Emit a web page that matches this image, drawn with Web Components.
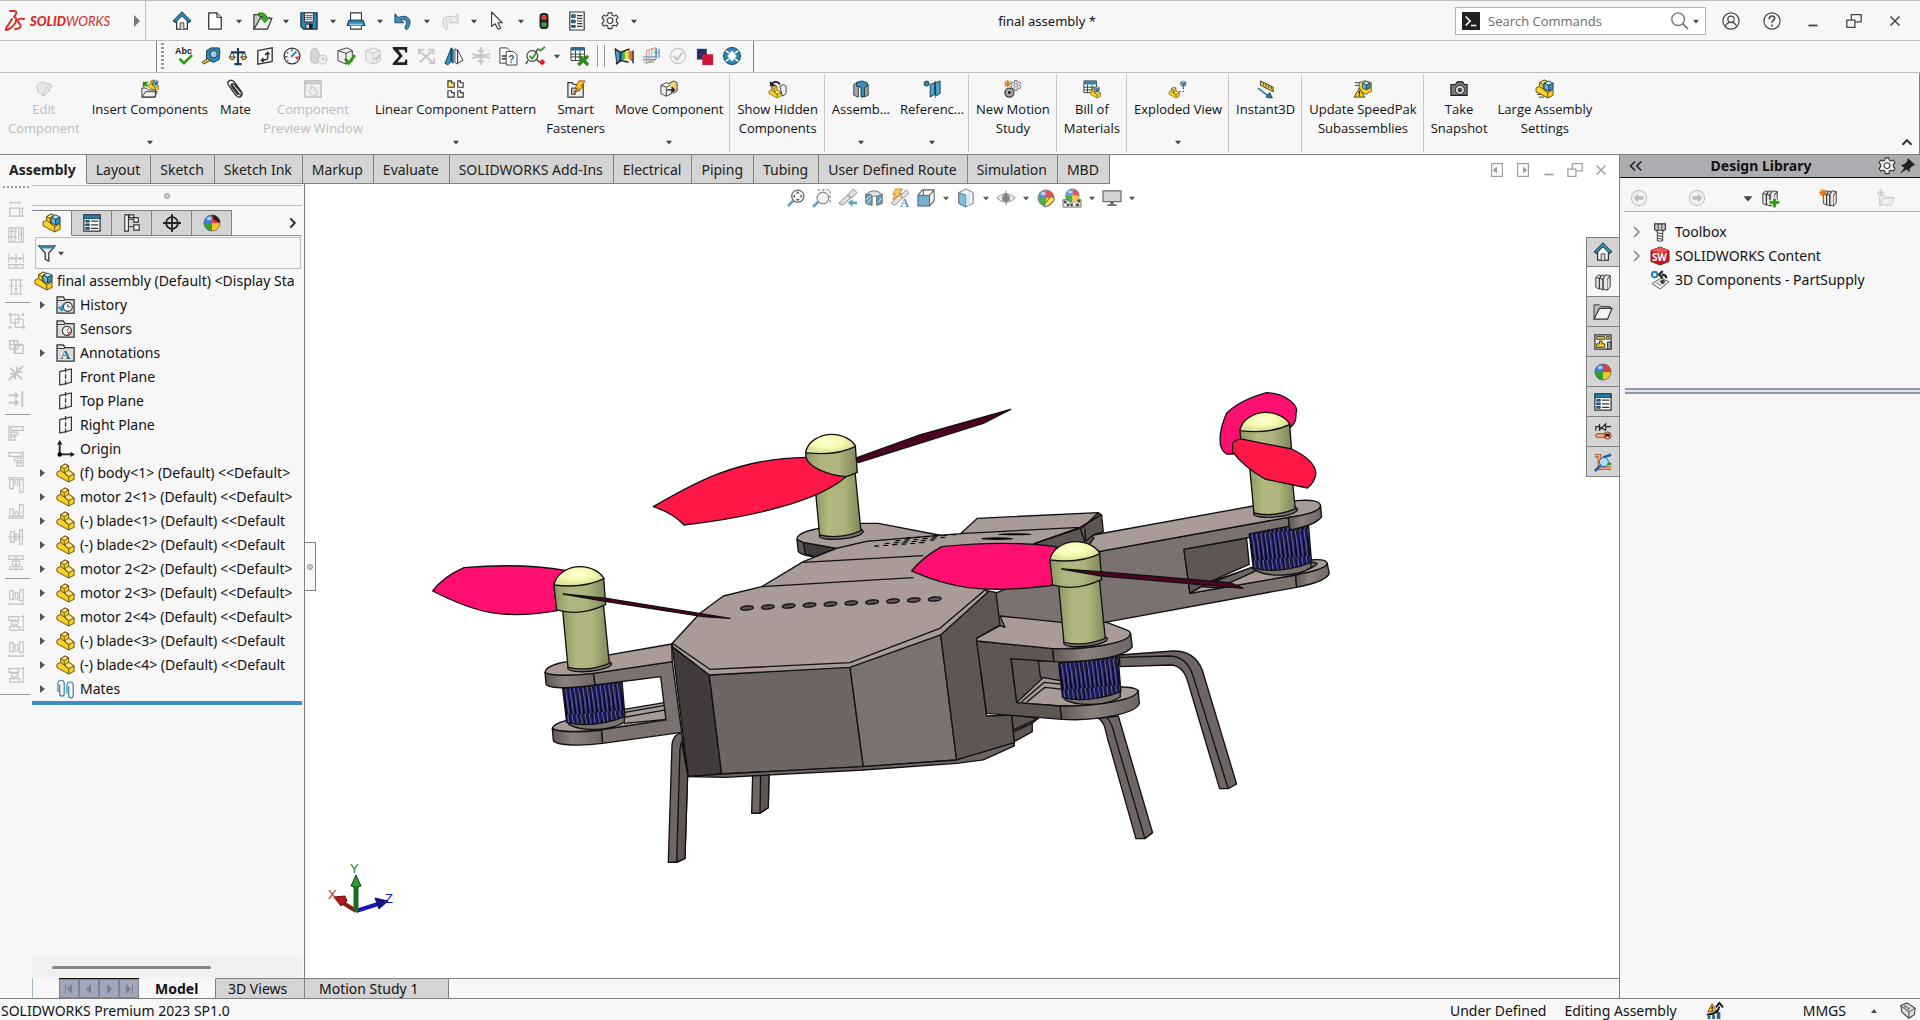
<!DOCTYPE html>
<html lang="en">
<head>
<meta charset="utf-8">
<title>final assembly</title>
<style>
:root {
  --bg: #f7f7f7;
  --line: #808080;
  --soft-line: #bdbdbd;
  --tab: #d4d4d4;
  --text: #111;
}
body {
  margin: 0;
  font: 14px/24px "Noto Sans", "Open Sans", sans-serif;
  color: var(--text);
  background: var(--bg);
}
</style>
</head>
<body>
<cad-app></cad-app>

<script>
// Icon bodies, all on a 20x20 grid
const cube = (x, y, s = 1) => `<g transform="translate(${x} ${y}) scale(${s})" stroke="#1c3f52" stroke-width=".8" stroke-linejoin="round"><path fill="#c2e6f4" d="M0 2 4 0l4 2-4 2z"/><path fill="#6dbad9" d="M0 2l4 2v5L0 7z"/><path fill="#3a8fb8" d="M8 2 4 4v5l4-2z"/></g>`;
const block = `<g stroke="#5c4700" stroke-width="1" stroke-linejoin="round"><path fill="#f9d12c" d="M0 9l4-2V3l5-3 4 2v5l6 4v6l-6 3L0 13z"/><path fill="#fde77a" d="M4 3l5-3 4 2-5 3zM8 10l5-3 6 4-6 3z"/><path fill="none" d="M8 5v5l5 4v6M4 7l4 3"/></g>`;
const ball = `<path fill="#e03a3a" d="M10 10V1a9 9 0 0 1 9 9z"/><path fill="#3d7fdd" d="M10 10H1a9 9 0 0 1 9-9z"/><path fill="#2ea12e" d="M10 10v9a9 9 0 0 1-9-9z"/><path fill="#f3c32b" d="M10 10h9a9 9 0 0 1-9 9z"/><circle cx="10" cy="10" r="9" fill="none" stroke="#555" stroke-width=".7"/><ellipse cx="7" cy="5" rx="3" ry="2" fill="#fff" opacity=".6"/>`;
const folder = `<path fill="#ddd" stroke="#333" stroke-width="1.400" d="M0 19V1h7l2 3h10v15z"/><path stroke="#333" d="M0 5h9"/>`;
const books = `<g fill="#e4e4e4" stroke="#333" stroke-linejoin="round"><path d="M2 5l3-3 3 1-2 3v12l-4-2zM6 6l3-4 3 1-2 3v13l-4-2zM10 6l3-4 5 1-3 4v12l-5-1z"/><path d="M15 7l3-4v12l-3 4M2 5l4 1M6 6l4 1"/></g>`;
const house = `<path fill="#fff" stroke="#333" stroke-width="1.400" d="M4 9v10h12V9l-6-6z"/><path fill="#ddd" stroke="#333" d="M8 19v-7h4v7"/><path fill="none" stroke="#17415a" stroke-width="4" d="M1 11l9-9 9 9"/><path fill="none" stroke="#3a8db5" stroke-width="2" d="M2 10l8-8 8 8"/>`;
const proplist = `<path fill="#fff" stroke="#333" stroke-width="1.400" d="M1 1h18v18H1z"/><path fill="#2a7fa8" stroke="#17415a" d="M1 1h18v4H1z"/><path fill="#1f7fb0" stroke="#17415a" d="M3 7h4v2H3zM3 11h4v2H3zM3 15h4v2H3z"/><path stroke="#333" stroke-width="1.400" d="M9 8h8M9 12h8M9 16h8"/>`;
const gearShape = `<path fill="#eee" stroke="#333" stroke-width="1.200" stroke-linejoin="round" d="M8 1h4l.6 2.6 2 1 2.300-1.200 2 3-1.800 1.800v2.600l1.800 1.900-2 3-2.400-1.100-1.900 1-.6 2.900H8l-.6-2.900-1.900-1-2.400 1.100-2-3L3 10.800V8.200L1.100 6.400l2-3 2.300 1.200 2-1z"/><circle cx="10" cy="9.500" r="3.200" fill="#fff" stroke="#333" stroke-width="1.200"/>`;
const burst = `<path stroke="#e07b1a" stroke-width="1.300" d="M4 0v8M0 4h8M1 1l6 6M7 1 1 7"/>`;
const plane = `<path fill="none" stroke="#333" stroke-width="1.300" d="M3 4l13-3v15L3 19z"/><path stroke="#333" stroke-width="1.300" stroke-dasharray="5 2" d="M9.500 0v20"/>`;

const icons = {
  caret: `<path fill="#444" d="M5 8h10l-5 6z"/>`,
  home: house,
  doc: `<path fill="#fff" stroke="#333" stroke-width="1.400" stroke-linejoin="round" d="M3 1h9l5 5v13H3z"/><path fill="#ccc" stroke="#333" d="M12 1v5h5"/>`,
  open: `<path fill="#ccc" stroke="#333" stroke-width="1.300" d="M1 19V3h5l2 2h7v4"/><path fill="#eee" stroke="#333" stroke-width="1.300" d="M1 19 8 7h13l-5 12z"/><path fill="#39a81c" stroke="#1c6b0a" stroke-width=".6" d="M6 1c6-1 9 1 9 5h4l-6 6-5-6h3c0-2-2-3-5-3z"/>`,
  save: `<path fill="#2f86b0" stroke="#12384d" stroke-width="1.400" d="M1 1h18v18H4l-3-3z"/><path fill="#eee" stroke="#333" d="M5 1h10v10H5z"/><path stroke="#555" d="M6 4h8M6 6h8M6 8h8"/><path fill="#222" d="M6 13h8v6H6z"/><path fill="#ddd" d="M7 14h3v4H7z"/>`,
  print: `<path fill="#fff" stroke="#333" stroke-width="1.200" d="M4 10V1h12v9zM4 14h12v5H4z"/><path fill="#2f86b0" stroke="#12384d" d="M2 9h16l2 6H0z"/><path fill="#9cd0e6" d="M3 13h14v2H3z"/>`,
  undo: `<path fill="#3a8fb8" stroke="#12384d" stroke-width=".9" stroke-linejoin="round" d="M1 2v10h10L8 9c5-2 8 2 4 8l2 3C22 12 17 1 5 6z"/>`,
  redo: `<path fill="#ececec" stroke="#bdbdbd" stroke-linejoin="round" d="M19 2v10H9l3-3C7 7 4 11 8 17l-2 3C-2 12 3 1 15 6z"/>`,
  cursor: `<path fill="#fff" stroke="#333" stroke-width="1.200" stroke-linejoin="round" d="M4 0v16l4-3 3 6 3-1-3-6h5z"/>`,
  traffic: `<rect x="5" y="1" width="10" height="18" rx="4" fill="#222"/><circle cx="10" cy="6" r="3" fill="#e23b2a"/><circle cx="10" cy="14" r="3" fill="#3c9a2f"/>`,
  list: `<path fill="#fff" stroke="#333" stroke-width="1.300" d="M2 0h16v20H2z"/><path fill="#2f86b0" stroke="#12384d" d="M4 3h4v3H4zM4 9h4v3H4zM4 15h4v2H4z"/><path stroke="#333" stroke-width="1.300" d="M10 4h6M10 7h6M10 10h6M10 13h6M10 16h6"/>`,
  gear: gearShape,
  spell: `<text x="0" y="8" font-size="10" font-weight="600" fill="#222">Abc</text><path fill="none" stroke="#2c9a12" stroke-width="3" d="M5 13l5 5 9-9"/>`,
  tape: `<path fill="#2f86b0" stroke="#12384d" d="M5 4l5-3h9l1 4-1 9-6 3-8-3z"/><circle cx="13" cy="8" r="4" fill="#9cd0e6" stroke="#12384d"/><path fill="#f5c518" stroke="#333" d="M0 17l6-4 3 2-7 4z"/>`,
  scales: `<path fill="none" stroke="#17415a" stroke-width="2.400" d="M10 1v17M6 19h8M2 6h16"/><path fill="#f5c518" stroke="#333" d="M0 11h7l-2 3H2zM13 11h7l-2 3h-3z"/><path fill="none" stroke="#333" d="M3 6l-2 5M4 6l2 5M16 6l-2 5M17 6l2 5"/>`,
  section: `<path fill="#fff" stroke="#333" stroke-width="1.500" d="M2 4l16-3v15L2 19z"/><path fill="none" stroke="#333" stroke-width="1.700" d="M6 15l5-1c2 0 2-1 2-3V6M10 9l3-3 2 2M8 12l-2 3 3 1"/>`,
  gauge: `<circle cx="10" cy="10" r="8.800" fill="#fff" stroke="#333" stroke-width="1.400"/><path stroke="#3a8fb8" stroke-width="2.500" d="M9 11l6-6"/><path fill="#e23b2a" d="M13 11l5-1-2 5z"/><path stroke="#333" stroke-width="1.200" d="M4 6l2 1M10 2v3M2 11h3M5 15l1-1"/>`,
  grayball: `<g fill="#d5d5d5" stroke="#b9b9b9"><path d="M1 9c-1-10 9-10 9-1l2 6-5 5-6-3z"/><circle cx="14" cy="14" r="5" fill="#eee"/><path d="M14 11v3h3"/></g>`,
  boxcheck: `<path fill="#eee" stroke="#333" stroke-linejoin="round" d="M1 4l10-3 6 3v12l-7 3-9-4z"/><path fill="none" stroke="#333" d="M1 4l9 3 7-3M10 7v12"/><path fill="none" stroke="#2c9a12" stroke-width="3" d="M9 13l4 5 7-9"/>`,
  boxgray: `<g fill="#eee" stroke="#c0c0c0" stroke-linejoin="round"><path d="M2 4l9-3 7 3v12l-8 3-8-4z"/><path fill="none" d="M2 4l8 3 8-3M10 7v12"/><path fill="none" stroke-width="2" d="M12 12l2 2 3-5"/></g>`,
  sigma: `<path fill="#222" d="M2 0h16v6h-2l-1-3H8l5 7-6 7h8l1-3h2v6H2v-2l7-8-7-8z"/>`,
  pathgray: `<path fill="none" stroke="#c6c6c6" stroke-width="2" d="M2 5l14 12M15 5 2 17M1 8V3h6M11 3h6v5M18 12v6h-6"/>`,
  mirror: `<path fill="#3a8fb8" stroke="#12384d" d="M0 18l7-17v15l-4 4zM7 1l2 2v15l-2-2z"/><path fill="#fff" stroke="#333" d="M11 2v15l3 2V4zM14 3l6 12-6 3z"/>`,
  compress: `<path fill="none" stroke="#c8c8c8" stroke-width="2" d="M0 8q10 2 20 0M0 12q10-2 20 0M10 0v6M7 3l3 4 3-4M10 20v-6M7 17l3-4 3 4"/>`,
  docq: `<path fill="#fff" stroke="#333" d="M1 1h8l3 3v14H1z"/><path stroke="#333" stroke-width="1.500" d="M3 10h5M3 13h5"/><path fill="#fff" stroke="#333" d="M8 5h8l4 4v11H8z"/><text x="10" y="18" font-size="12" font-weight="700" fill="#1f6f96">?</text>`,
  checks: `<circle cx="7" cy="10" r="6" fill="none" stroke="#444" stroke-width="1.300"/><path fill="none" stroke="#2c9a12" stroke-width="2" d="M4 10l3 3 4-6M14 2l2 2 5-4"/><path fill="none" stroke="#444" stroke-width="1.600" d="M10 6l4-4M2 15l-2 4M11 13l4 4"/><path stroke="#d22" stroke-width="1.600" d="M18 14v6M15 17h6M16 15l4 4M20 15l-4 4"/>`,
  excel: `<path fill="#fff" stroke="#333" d="M0 1h15v14H0z"/><path fill="#2a6f92" d="M0 0h15v4H0z"/><path stroke="#333" d="M0 8h15M0 11h15M5 4v11M10 4v11"/><path stroke="#2c8a12" stroke-width="3.600" d="M9 10l10 10M19 10 8 20"/>`,
  rainbow: `<path fill="#5a9cc0" stroke="#222" d="M0 2l6 4v8l-4 5z"/><path fill="#2040c0" d="M5 6l3-1v9l-4 2z"/><path fill="#2fb52f" d="M8 5l3-2v10l-3 2z"/><path fill="#f4e02a" d="M11 3l4-1v10l-4 2z"/><path fill="#e2762a" d="M15 3l4 2v11l-4-3z"/><path fill="none" stroke="#222" stroke-width="1.600" d="M0 2l6 4 10-4M20 4v14M1 19l6-4 8 2"/>`,
  zebra: `<path fill="none" stroke="#e8958a" stroke-width="1.400" d="M5 4l10-3v13L5 18z"/><path stroke="#6a9ccc" stroke-width="1.500" d="M1 11h15M1 14h14M16 1v12M19 2v10M13 6h6"/><path stroke="#8fb58f" d="M8 4v13M11 3v13M2 17h12"/>`,
  checkgray: `<circle cx="10" cy="10" r="8.500" fill="#f4f4f4" stroke="#c5c5c5" stroke-width="1.300"/><path fill="none" stroke="#c5c5c5" stroke-width="2.500" d="M5 10l4 4 6-8"/>`,
  squares: `<path fill="#25336e" d="M1 2h11v12H1z"/><path fill="#cf1634" d="M7 8h12v12H7z"/>`,
  globe: `<circle cx="10" cy="10" r="9.500" fill="#2f86b0" stroke="#12384d"/><path fill="#fff" d="M10 4l5 6-5 6-5-6z"/><path stroke="#fff" stroke-width="1.500" d="M3 4l4 3M17 4l-4 3M3 16l4-3M17 16l-4-3"/>`,
  edit: `<g fill="#e8e8e8" stroke="#c0c0c0" stroke-linejoin="round"><path d="M2 6l6-4 8 3v7l-7 6-6-5z"/><path d="M9 18l1-5 6-9 3 2-6 9z"/></g>`,
  insert: `<g transform="translate(8 0) scale(.6)">${block}${cube(9, 0, 1.1)}</g><path fill="#eee" stroke="#333" d="M1 19V9h5l2 2h8v8zM1 19l4-6h13l-3 6z"/><path fill="none" stroke="#2c8a12" stroke-width="2" d="M3 8V3h5M3 3l4 4"/>`,
  clip: `<path fill="none" stroke="#333" stroke-width="1.500" stroke-linecap="round" d="M6 5l8 10c2 3 5 1 3-2L9 2C5-2 0 2 3 6l8 11c4 4 8 1 6-3L9 5C7 3 5 5 6 7l7 9"/>`,
  preview: `<g fill="#efefef" stroke="#bdbdbd"><path stroke-width="1.500" d="M1 1h18v18H1z"/><path fill="#d5d5d5" d="M1 1h18v3H1z"/><path d="M5 12l3-2V7l4 2v3l3 1v3l-5 2z"/></g>`,
  pattern: `<g fill="#fff" stroke="#333" stroke-width="1.200"><path fill="#f9df6a" d="M1 1h4v2h3v5H1z"/><path d="M12 1h3v2h3v5h-6zM1 12h4v2h3v5H1zM12 12h3v2h3v5h-6z"/></g>`,
  fastener: `<path fill="#eee" stroke="#333" stroke-width="1.300" d="M1 3h5l1 2h11v14H1z"/><path fill="#bbb" stroke="#333" d="M5 9h9v3H9v4H5z"/><path fill="#f8c32b" stroke="#a04a00" d="M13 1h7l-4 6h3L8 15l4-6H9z"/>`,
  move: `<path fill="#eee" stroke="#333" d="M1 6l6-3 6 2v10l-6 3-6-3zM1 6l6 2 6-3M7 8v10"/><path fill="#f3d27a" stroke="#333" d="M10 4l5-3 4 2v9l-4 3"/><path fill="none" stroke="#111" stroke-width="1.600" d="M8 11h7M13 8l3 3-3 3"/>`,
  show: `<g transform="translate(0 6) scale(.7)">${block}</g><path fill="#eee" stroke="#333" d="M12 7l4-2 3 2v8l-4 3z"/><path fill="none" stroke="#222" stroke-width="2" d="M3 6c1-5 7-5 9-1M2 2v4h5"/>`,
  feature: `<path fill="#aaa" stroke="#333" d="M2 5l5-3v17l-5-2zM13 3l5 2v12l-5 2z"/><path fill="#3a8db5" stroke="#12384d" d="M5 3l6-2 6 2v4l-3 1v10l-4 1V8L5 7z"/>`,
  reference: `<circle cx="4" cy="4" r="2.800" fill="#2f86b0" stroke="#12384d"/><path fill="#4aa6cf" stroke="#12384d" d="M8 5l5-2v13l-5 3zM14 3l5-2v14l-5 3z"/><path stroke="#222" stroke-dasharray="4 2" d="M13.500 1v19"/>`,
  motion: `${burst}<g transform="translate(7 0) scale(.62)">${gearShape}</g><circle cx="6" cy="14" r="5" fill="#aaa" stroke="#444" stroke-width="1.500"/><circle cx="6" cy="14" r="1.500"/>`,
  bom: `<path fill="#fff" stroke="#333" d="M1 1h14v13H1z"/><path fill="#2f86b0" d="M1 1h14v4H1z"/><path stroke="#333" d="M1 8h14M1 11h14M5 5v9M10 5v9"/><g transform="translate(8 8) scale(.6)">${block}${cube(8, -1, 1.1)}</g>`,
  exploded: `<g transform="translate(0 8) scale(.6)">${block}</g>${cube(13, 1, .7)}<path fill="none" stroke="#222" stroke-dasharray="2 2" d="M11 13h5V8"/>`,
  instant: `<path fill="#f5d02a" stroke="#333" d="M4 1l14 7v5L4 6z"/><path stroke="#333" d="M7 3v3M10 4v4M13 6v3M16 7v3"/><path stroke="#2f86b0" stroke-width="2" d="M1 9l12 9"/><path fill="#2f86b0" stroke="#12384d" d="M17 20l-7-1 4-5z"/>`,
  speedpak: `<path stroke="#333" d="M1 3h6M1 6h5"/><g transform="translate(5 0) scale(.75)"><path fill="#f7cf2a" stroke="#333" d="M1 4l8-3 10 3v13l-8 4-10-4z"/>${cube(6, 2, 1.4)}</g><path fill="#ffd500" stroke="#333" d="M6 9l6 10H0z"/><path stroke="#111" stroke-width="1.500" d="M6 12v4M6 17v1"/>`,
  camera: `<path fill="#777" stroke="#222" stroke-width="1.300" d="M1 5h5l2-3h6l2 3h3v12H1z"/><circle cx="11" cy="11" r="5" fill="#ddd" stroke="#222"/><circle cx="11" cy="11" r="2.500" fill="#444"/>`,
  asm: `${block}${cube(9, 1, 1.25)}`,
  large: `<path stroke="#333" d="M1 13h7M1 16h7M3 19h6"/>${block}${cube(9, 1, 1.25)}`,
  props: proplist,
  config: `<path fill="none" stroke="#333" d="M4 3v14M4 6h8M4 14h8"/><path fill="#fff" stroke="#333" stroke-width="1.300" d="M2 1h4v18H2zM7 1h5v3H7zM12 4h5v5h-5zM12 12h6v6h-6z"/>`,
  target: `<circle cx="10" cy="10" r="6.500" fill="none" stroke="#222" stroke-width="2"/><path stroke="#222" stroke-width="2" d="M10 0v20M0 10h20"/>`,
  ball,
  appear: `${ball}<path fill="#222" d="M10 1a9 9 0 0 1 9 9l-7-4z"/>`,
  filter: `<path fill="#eee" stroke="#333" stroke-width="1.400" d="M1 2h18l-7 8v9l-4-2v-7z"/><path fill="#2f86b0" d="M1 1h18l-2 4H3z"/>`,
  history: `${folder}<circle cx="12" cy="12" r="5" fill="#fff" stroke="#333" stroke-width="1.300"/><path fill="none" stroke="#333" d="M12 9v3h3"/><path fill="none" stroke="#2f86b0" stroke-width="2" d="M5 15c0-4 2-6 5-7M2 12l3 4 3-2"/>`,
  sensors: `${folder}<circle cx="11" cy="12" r="5" fill="#fff" stroke="#333" stroke-width="1.400"/><path stroke="#333" d="M11 12l2-3"/><path fill="#e23b2a" d="M11 13h4l-2 3z"/>`,
  notes: `${folder}<text x="4" y="17" font-size="15" font-weight="700" font-family="Liberation Serif, serif" fill="#1f6f96">A</text>`,
  plane,
  origin: `<path fill="none" stroke="#222" stroke-width="2" d="M3 3v13h13"/><path fill="#222" d="M0 5l3-5 3 5zM15 13l5 3-5 3z"/><circle cx="3" cy="16" r="2.500"/>`,
  part: block,
  mates: `<path fill="none" stroke="#2f7fa6" stroke-width="1.300" d="M1 13V4c0-5 7-5 7 0v11c0 4-5 4-5 0V5M11 15V6c0-5 7-5 7 0v11c0 4-5 4-5 0V7"/>`,
  zoomfit: `<path stroke="#4b90b5" stroke-width="3" d="M1 19l6-6"/><circle cx="12" cy="8" r="6.800" fill="#f8f8f8" stroke="#555" stroke-width="1.400"/><path fill="#333" d="M12 2.500l2 2.500h-4zM12 13.500l2-2.500h-4zM6.500 8L9 6v4zM17.500 8L15 6v4z"/>`,
  zoomarea: `<path stroke="#4b90b5" stroke-width="3" d="M0 20l6-6"/><circle cx="11" cy="10" r="6.500" fill="#eee" stroke="#777" stroke-width="1.300"/><path fill="none" stroke="#444" stroke-dasharray="3 2" d="M5 1h14v14"/>`,
  prevview: `<path fill="#ddd" stroke="#666" d="M0 16l9-9 4 3-9 8zM10 6l6-6 4 4-6 6z"/><path fill="#4b90b5" d="M10 15l5-4v3h5v3h-5v3z"/>`,
  sectview: `<path fill="#ddd" stroke="#555" d="M1 6q9-8 18 0v10l-6 2V8H8v10l-7-2z"/><path fill="#4b90b5" stroke="#555" d="M1 6h6v12l-6-2zM13 8l6-2v10l-6 2z"/><path stroke="#def" d="M1 12l6-5M2 16l5-5M14 15l5-5"/>`,
  dynview: `<path fill="#ddd" stroke="#777" d="M0 16l9-9 4 3-9 8zM11 7l6-6 3 4-6 5z"/><path fill="#f8c32b" stroke="#c06a1a" d="M5 0h8L9 5h3L2 12l3-6H2z"/><text x="10" y="20" font-size="14" font-weight="700" font-family="Liberation Serif, serif" fill="#3a85ad">A</text>`,
  orient: `<path fill="none" stroke="#444" stroke-width="1.200" d="M1 7l5-6h13v12l-5 6M14 7l5-6M7 1v6"/><path fill="#5aa5c8" stroke="#335" d="M1 7h13v12H1z"/>`,
  display: `<path fill="#eee" stroke="#555" d="M2 4l8-4 8 4v12l-8 4-8-4z"/><path fill="#6db3d3" stroke="#357" d="M2 4l8 3v13l-8-4z"/><path fill="#c5e2ee" d="M10 7l4-2v13l-4 1z"/>`,
  eye: `<path fill="#eee" stroke="#999" stroke-width="1.300" d="M0 10q10-10 20 0-10 9-20 0z"/><circle cx="10" cy="10" r="4.500" fill="#777"/><path stroke="#555" d="M10 2v16"/>`,
  ballpen: `${ball}<path fill="#f7dc3c" stroke="#444" d="M9 16l7-8 4 4-8 7-4 1z"/>`,
  scene: `<path fill="#fff" stroke="#333" d="M0 12h20v8H0z"/><path fill="#333" d="M1 13h3v3H1zM8 16h3v3H8zM4 16h3v3H4zM14 16h4v3h-4zM16 12h3v3h-3z"/><g transform="translate(2 -1) scale(.85)">${ball}</g>`,
  monitor: `<path fill="#ccc" stroke="#555" stroke-width="1.400" d="M0 2h20v12H0z"/><path fill="#555" d="M8 14h4v3h3v2H5v-2h3z"/>`,
  books,
  explorer: `<path fill="#bbb" stroke="#333" d="M0 18V2h6l2 2h10v4"/><path fill="#f4f4f4" stroke="#333" stroke-width="1.300" d="M0 18 6 6h14l-5 12z"/>`,
  palette: `<path fill="#eee" stroke="#333" stroke-width="1.400" d="M1 2h18v16H1z"/><path fill="#f5c518" stroke="#333" d="M3 4h9v3H3zM14 4h3v3h-3zM6 9h3v3h3v4H3v-4h3z"/><path fill="#999" stroke="#333" d="M15 10h4v8h-4z"/>`,
  valve: `<path fill="none" stroke="#222" stroke-width="1.200" d="M2 9V4h4l7 4V1L6 8V1M13 4h6"/><path fill="none" stroke="#8a3a1a" stroke-width="5" stroke-linecap="round" d="M4 14l12 0"/><path fill="none" stroke="#f4b08a" stroke-width="3" stroke-linecap="round" d="M4 14h10"/><circle cx="15" cy="14" r="4" fill="#f4b08a" stroke="#8a3a1a"/><path stroke="#8a3a1a" d="M13 12v4l2-2 2 2v-4"/>`,
  route: `<path fill="none" stroke="#a04a1a" stroke-width="4" d="M1 3h5v14h13"/><path fill="none" stroke="#f5b07a" stroke-width="2" d="M1 3h5v14h13"/><path stroke="#2060b0" stroke-width="3" d="M10 5l9-3M1 20l6-6"/><path stroke="#2c9a12" stroke-width="3" d="M14 12h5"/><circle cx="11" cy="10" r="5" fill="#b5daf0" stroke="#2060b0"/>`,
  back: `<circle cx="10" cy="10" r="8.500" fill="#f2f2f2" stroke="#c8c8c8" stroke-width="1.300"/><path fill="#bdbdbd" d="M4 10l5-5v3h6v4H9v3z"/>`,
  forward: `<circle cx="10" cy="10" r="8.500" fill="#f2f2f2" stroke="#c8c8c8" stroke-width="1.300"/><path fill="#bdbdbd" d="M16 10l-5-5v3H5v4h6v3z"/>`,
  bookadd: `${books}<path fill="#2c9a12" stroke="#fff" d="M13 10h4v3h4v4h-4v4h-4v-4H9v-4h4z"/>`,
  booknew: `<g transform="translate(3 0) scale(.9 1)">${books}</g>${burst}`,
  foldernew: `<g stroke="#c5c5c5" fill="#eee"><path d="M3 18V7h5l2 2h7v2M3 18l4-8h12l-3 8z"/><path d="M4 0v8M0 4h8M1 1l6 6M7 1 1 7"/></g>`,
  bolt: `<path fill="#ccc" stroke="#333" stroke-width="1.300" d="M4 1h12v6l-3 2H7L4 7z"/><path fill="#eee" stroke="#333" d="M7 8h6v12H7z"/><path stroke="#333" d="M8 1v7M12 1v7M7 11l6 1M7 14l6 1M7 17l6 1"/>`,
  sw: `<path fill="#c71c22" stroke="#7a0c10" d="M0 4l10-4 10 4v12l-10 4-10-4z"/><path fill="#e85a5a" d="M0 4l10-4 10 4-10 3z"/><text x="1" y="16" font-size="11" font-weight="700" fill="#fff">SW</text>`,
  supply: `<path fill="#eee" stroke="#555" d="M1 14l10-6 9 4-10 8zM6 13l5 3M9 11l5 3"/><circle cx="13" cy="12" r="2.500" fill="#444"/><circle cx="4" cy="4" r="3" fill="#fff" stroke="#2f86b0" stroke-width="2.500"/><path fill="none" stroke="#222" stroke-width="2.400" d="M17 8c0-3-2-4-5-4M13 0L9 4l4 4"/>`,
  collapse: `<path fill="none" stroke="#222" stroke-width="1.800" d="M10 5l-5 5 5 5M17 5l-5 5 5 5"/>`,
  pin: `<path fill="#222" d="M11 1l8 8-3 1-3 3v4L3 9l4-1 3-3zM7 12l2 2-7 5z"/>`,
  right: `<path fill="none" stroke="#333" stroke-width="2.200" d="M7 5l5 5-5 5"/>`,
  up: `<path fill="none" stroke="#333" stroke-width="2.200" d="M5 13l5-5 5 5"/>`,
  user: `<circle cx="10" cy="10" r="9" fill="none" stroke="#444" stroke-width="1.300"/><circle cx="10" cy="8" r="3.500" fill="none" stroke="#444" stroke-width="1.300"/><path fill="none" stroke="#444" stroke-width="1.300" d="M4 16c1-6 11-6 12 0"/>`,
  help: `<circle cx="10" cy="10" r="9" fill="none" stroke="#444" stroke-width="1.300"/><path fill="none" stroke="#444" stroke-width="1.800" d="M7 8c0-5 6-4 6-1 0 2-3 2-3 5M10 14v2"/>`,
  min: `<path stroke="#444" stroke-width="2" d="M5 15h10"/>`,
  restore: `<path fill="none" stroke="#444" stroke-width="1.400" d="M2 9h9v8H2zM7 9V3h11v8h-7"/>`,
  close: `<path stroke="#444" stroke-width="1.600" d="M5 5l10 10M15 5 5 15"/>`,
  dockleft: `<path fill="none" stroke="#444" stroke-width="1.300" d="M4 3h12v14H4z"/><path fill="#444" d="M5 10l5-4v8z"/>`,
  dockright: `<path fill="none" stroke="#444" stroke-width="1.300" d="M4 3h12v14H4z"/><path fill="#444" d="M15 10l-5-4v8z"/>`,
  prompt: `<path fill="#222" d="M0 0h20v20H0z"/><path fill="none" stroke="#fff" stroke-width="1.800" d="M4 5l5 5-5 5M10 15h6"/>`,
  search: `<circle cx="9" cy="8" r="7" fill="none" stroke="#777" stroke-width="1.500"/><path stroke="#777" stroke-width="2" d="M14 13l6 6"/>`,
  rebuild: `<path fill="#2d6285" d="M3 15h3v4H3zM8 14h3v5H8zM13 11h4v8h-4z"/><path fill="#f8c32b" stroke="#8a3a00" d="M8 2l5 9H3z"/><path stroke="#111" stroke-width="1.500" d="M8 5v3M8 9v1"/><path fill="none" stroke="#111" stroke-width="2" d="M2 14c8 0 13-2 14-9M12 6l4-5 4 5"/>`,
  tag: `<path fill="#ddd" stroke="#444" stroke-width="1.200" d="M2 4l7-3 9 6-1 7-6 4L3 11z"/><path fill="none" stroke="#444" d="M2 4l9 7 7-4M11 11v7M6 4l6 4M5 7l3-3M9 9l3-3"/>`,
  d1: `<path d="M3 9h11v9H3zM4 3h10M4 1v4M14 1v4M17 9v9M15 9h4M15 18h4"/>`,
  d2: `<path d="M2 2v16h16V2H2M5 2v16M9 2v16M13 4v12M16 2v16M3 6h8M3 12h8M14 9h4"/>`,
  d3: `<path d="M2 2v10M10 2v10M18 2v10M2 7h16M2 14h16v4H2zM10 14v4M5 5l2 4M13 5l2 4"/>`,
  d4: `<path d="M3 2h14M3 18h14M5 2v16M10 2v16M15 2v16M3 9h4M8 12h4M13 9h4"/>`,
  d5: `<path d="M4 3h9v9H4zM9 8h9v9H9z"/><path stroke-width="3" d="M2 3h3M16 3h3M2 17h3M17 17h3"/>`,
  d6: `<path stroke-width="1.500" d="M3 3h9v9H3zM9 8h9v9H9zM3 7h14M8 3v14"/>`,
  d7: `<path stroke-width="2" d="M2 18l6-6M18 2l-6 6M3 4l14 13M3 11h6v6M11 3v6h6"/>`,
  d8: `<path stroke-width="2" d="M2 6h10M9 3l3 3-3 3M2 14h10M9 11l3 3-3 3M17 1v18"/>`,
  left: `<path d="M2 1v18M4 3h14v4H4zM4 9h8v3H4zM4 14h5v4H4z"/>`,
  rightal: `<path d="M18 1v18M2 3h14v4H2zM8 9h8v3H8zM11 14h5v4h-5z"/>`,
  top: `<path d="M1 2h18M3 4h4v10H3zM9 4h3v6H9zM14 4h4v14h-4z"/>`,
  bottom: `<path d="M1 18h18M3 8h4v8H3zM9 11h3v5H9zM14 3h4v13h-4z"/>`,
  midh: `<path d="M1 10h18M4 4h4v12H4zM9 7h3v6H9zM14 2h3v16h-3z"/>`,
  midv: `<path d="M10 1v18M2 2h16v4H2zM6 8h8v4H6zM3 14h14v3H3z"/>`,
  dist1: `<path d="M3 3h4v10H3zM9 5h3v7H9zM14 2h4v12h-4zM1 18h18M3 16v3M18 16v3"/>`,
  dist2: `<path d="M2 3h11v4H2zM5 8h7v4H5zM3 14h11v4H3zM18 1v18M15 3h4M15 18h4"/>`
};

const sheets = {};

// Small base: clones a cached template into an open shadow root
class CadElement extends HTMLElement {
  constructor() {
    super();
    const shadow = this.attachShadow({mode: 'open'});
    const key = this.constructor.name;
    if (this.constructor.markup) {
      if (!sheets[key]) {
        sheets[key] = document.createElement('template');
        sheets[key].innerHTML = this.constructor.markup;
      }
      shadow.appendChild(sheets[key].content.cloneNode(true));
    }
  }
}

class CadIcon extends CadElement {
  connectedCallback() {
    const name = this.getAttribute('name');
    this.shadowRoot.innerHTML = `
<style>
:host { display: inline-flex; flex: none; width: 18px; height: 18px; }
:host([size="small"]) { width: 12px; height: 12px; }
:host([faded]) { opacity: 0.5; }
svg { width: 100%; height: 100%; overflow: visible; }
.dim { fill: none; stroke: #c4c4c4; stroke-width: 1.3; }
</style>
<svg viewBox="0 0 20 20" aria-hidden="true"><g class="${this.hasAttribute('dim') ? 'dim' : ''}">${icons[name] || ''}</g></svg>`;
  }
}
customElements.define('cad-icon', CadIcon);

// Icon button, with a drop-down arrow beside it when "menu" is set
class ToolButton extends CadElement {
  connectedCallback() {
    const label = this.getAttribute('label') || this.getAttribute('icon');
    const faded = this.hasAttribute('faded') ? 'faded' : '';
    const dim = this.hasAttribute('dim') ? 'dim' : '';
    this.shadowRoot.innerHTML = `
<style>
:host { display: flex; flex: none; align-items: center; }
button {
  display: flex; align-items: center; justify-content: center;
  width: var(--tool-width, 24px); height: 24px;
  margin: 0; padding: 0; border: 0; background: none;
}
.menu { width: var(--menu-width, 23px); }
</style>
<button aria-label="${label}"><cad-icon name="${this.getAttribute('icon')}" ${faded} ${dim}></cad-icon></button>
${this.hasAttribute('menu') ? `<button class="menu" aria-label="${label} menu"><cad-icon name="caret" size="small" ${faded}></cad-icon></button>` : ''}`;
  }
}
customElements.define('tool-button', ToolButton);

class TitleBar extends CadElement {
  static markup = `
<style>
:host {
  display: grid; grid-template-columns: auto 1fr auto; align-items: center;
  height: 38px; padding-bottom: 1px; border-top: 1px solid var(--soft-line); border-bottom: 1px solid var(--soft-line);
  background: var(--bg);
}
.start, .end, .brand, .tools { display: flex; align-items: center; }
.brand {
  box-sizing: border-box; width: 146px; height: 39px; padding-left: 5px; gap: 5px;
  border-right: 1px solid var(--soft-line); color: #d9291c;
  font: italic 13px/20px Lato, sans-serif;
}
.brand svg { width: 20px; height: 22px; }
.brand .arrow { width: 6px; height: 12px; margin-left: auto; margin-right: 5px; }
b { font-weight: 900; }
.tools { padding-left: 24px; }
.tools tool-button:not([menu]) { margin-right: 9px; }
.name { font-size: 13px; text-align: center; padding-right: 6px; }
.search {
  box-sizing: border-box; display: flex; align-items: center; width: 251px; height: 28px;
  padding: 0 1px 0 6px; gap: 8px; border: 1px solid #b4b4b4; background: #fff;
}
input {
  flex: 1; min-width: 0; border: 0; padding: 0; outline: 0; background: none;
  font: 13px/20px "Open Sans", "Noto Sans", sans-serif;
}
input::placeholder { color: #6a6a6a; opacity: 1; }
.search tool-button { --tool-width: 18px; --menu-width: 16px; }
.window { display: flex; padding: 0 5px 0 4px; --tool-width: 41px; }
</style>
<div class="start">
  <div class="brand">
    <svg viewBox="0 0 20 22" fill="none" stroke="#d9291c" stroke-width="1.800" stroke-linecap="round" stroke-linejoin="round" aria-hidden="true">
      <path d="M5 1c7-1 8 1 4 6 4 0 2 7-1 9-2 2-5 4-8 4L7 9M19 9c-5-1-8 1-5 4s2 6-4 6"/>
    </svg>
    <span><b>SOLID</b>WORKS</span>
    <svg class="arrow" viewBox="0 0 6 12" aria-hidden="true"><path fill="#777" stroke="none" d="M0 0l6 6-6 6z"/></svg>
  </div>
  <div class="tools">
    <tool-button icon="home"></tool-button>
    <tool-button icon="doc" label="New" menu></tool-button>
    <tool-button icon="open" menu></tool-button>
    <tool-button icon="save" menu></tool-button>
    <tool-button icon="print" menu></tool-button>
    <tool-button icon="undo" menu></tool-button>
    <tool-button icon="redo" menu></tool-button>
    <tool-button icon="cursor" label="Select" menu></tool-button>
    <tool-button icon="traffic" label="Rebuild"></tool-button>
    <tool-button icon="list" label="File properties"></tool-button>
    <tool-button icon="gear" label="Options" menu></tool-button>
  </div>
</div>
<div class="name">final assembly *</div>
<div class="end">
  <div class="search">
    <cad-icon name="prompt"></cad-icon>
    <input type="text" aria-label="Search Commands" placeholder="Search Commands">
    <tool-button icon="search" menu></tool-button>
  </div>
  <div class="window">
    <tool-button icon="user" label="Log in"></tool-button>
    <tool-button icon="help"></tool-button>
    <tool-button icon="min" label="Minimize"></tool-button>
    <tool-button icon="restore"></tool-button>
    <tool-button icon="close"></tool-button>
  </div>
</div>`;
}
customElements.define('title-bar', TitleBar);

class CheckBar extends CadElement {
  static markup = `
<style>
:host { display: flex; height: 31px; padding-left: 156px; border-bottom: 1px solid var(--soft-line); background: var(--bg); }
.bar {
  display: flex; align-items: center; padding: 0 8px 1px 4px;
  border: solid var(--line); border-width: 0 1px;
  --tool-width: 27px; --menu-width: 18px;
}
.grip { width: 3px; height: 26px; margin-right: 6px; background: repeating-linear-gradient(#999 0 2px, transparent 2px 4px); }
.split { width: 6px; height: 22px; margin: 0 5px 0 4px; border: solid #999; border-width: 0 1px; }
</style>
<div class="bar">
  <div class="grip"></div>
  <tool-button icon="spell"></tool-button>
  <tool-button icon="tape" label="Measure"></tool-button>
  <tool-button icon="scales" label="Mass properties"></tool-button>
  <tool-button icon="section"></tool-button>
  <tool-button icon="gauge" label="Sensor"></tool-button>
  <tool-button icon="grayball"></tool-button>
  <tool-button icon="boxcheck"></tool-button>
  <tool-button icon="boxgray"></tool-button>
  <tool-button icon="sigma" label="Equations"></tool-button>
  <tool-button icon="pathgray"></tool-button>
  <tool-button icon="mirror"></tool-button>
  <tool-button icon="compress"></tool-button>
  <tool-button icon="docq"></tool-button>
  <tool-button icon="checks" menu></tool-button>
  <tool-button icon="excel"></tool-button>
  <div class="split"></div>
  <tool-button icon="rainbow"></tool-button>
  <tool-button icon="zebra"></tool-button>
  <tool-button icon="checkgray"></tool-button>
  <tool-button icon="squares"></tool-button>
  <tool-button icon="globe"></tool-button>
</div>`;
}
customElements.define('check-bar', CheckBar);

class RibbonItem extends CadElement {
  static markup = `
<style>
:host { display: block; flex: none; }
button {
  display: flex; flex-direction: column; align-items: center;
  height: 81px; padding: 7px 6px 0; margin: 0; border: 0; background: none;
  font: 13px/19px "Open Sans", "Noto Sans", sans-serif; color: inherit; white-space: nowrap;
}
:host([tight]) button { padding: 7px 4px 0; }
:host([disabled]) button { color: #bcbcbc; }
.text { margin-top: 2px; height: 36px; }
.menu { visibility: hidden; }
:host([menu]) .menu { visibility: visible; }
</style>
<button><cad-icon></cad-icon><span class="text"><slot></slot></span><cad-icon class="menu" name="caret" size="small"></cad-icon></button>`;
  connectedCallback() {
    const icon = this.shadowRoot.querySelector('cad-icon');
    icon.setAttribute('name', this.getAttribute('icon'));
    icon.connectedCallback();
    this.shadowRoot.querySelector('button').disabled = this.hasAttribute('disabled');
  }
}
customElements.define('ribbon-item', RibbonItem);

class CommandRibbon extends CadElement {
  static markup = `
<style>
:host {
  display: flex; height: 81px; padding-left: 2px; border-bottom: 1px solid var(--line); border-right: 1px solid var(--line);
  background: var(--bg);
}
.group { display: flex; padding-right: 1px; }
.group::after { content: ""; align-self: flex-start; width: 1px; height: 78px; margin-top: 1px; background: #c9c9c9; }
.group:last-of-type::after { content: none; }
.fold { margin-left: auto; align-self: flex-end; }
</style>
<div class="group">
  <ribbon-item icon="edit" disabled>Edit<br>Component</ribbon-item>
  <ribbon-item icon="insert" menu>Insert Components</ribbon-item>
  <ribbon-item icon="clip">Mate</ribbon-item>
  <ribbon-item icon="preview" disabled>Component<br>Preview Window</ribbon-item>
  <ribbon-item icon="pattern" menu>Linear Component Pattern</ribbon-item>
  <ribbon-item icon="fastener" tight>Smart<br>Fasteners</ribbon-item>
  <ribbon-item icon="move" menu>Move Component</ribbon-item>
</div>
<div class="group"><ribbon-item icon="show">Show Hidden<br>Components</ribbon-item></div>
<div class="group">
  <ribbon-item icon="feature" menu>Assemb...</ribbon-item>
  <ribbon-item icon="reference" menu tight>Referenc...</ribbon-item>
</div>
<div class="group"><ribbon-item icon="motion">New Motion<br>Study</ribbon-item></div>
<div class="group"><ribbon-item icon="bom">Bill of<br>Materials</ribbon-item></div>
<div class="group"><ribbon-item icon="exploded" menu>Exploded View</ribbon-item></div>
<div class="group"><ribbon-item icon="instant">Instant3D</ribbon-item></div>
<div class="group"><ribbon-item icon="speedpak">Update SpeedPak<br>Subassemblies</ribbon-item></div>
<div class="group">
  <ribbon-item icon="camera">Take<br>Snapshot</ribbon-item>
  <ribbon-item icon="large" tight>Large Assembly<br>Settings</ribbon-item>
</div>
<tool-button class="fold" icon="up" label="Collapse ribbon"></tool-button>`;
}
customElements.define('command-ribbon', CommandRibbon);

class RibbonTabs extends CadElement {
  static markup = `
<style>
:host { display: flex; align-items: center; height: 29px; background: #fff; }
nav { display: flex; height: 29px; }
button {
  box-sizing: border-box; height: 29px; padding: 0 10px 0 9px; margin: 0;
  border: solid var(--line); border-width: 0 1px 1px 0; background: var(--tab);
  font: 14px/27px "Noto Sans", "Open Sans", sans-serif; color: #222; white-space: nowrap;
}
button[aria-selected="true"] { background: var(--bg); font-weight: 700; border-bottom-color: transparent; }
.window { display: flex; margin-left: auto; padding-right: 5px; --tool-width: 26px; }
</style>
<nav role="tablist"></nav>
<div class="window">
  <tool-button icon="dockleft" faded></tool-button>
  <tool-button icon="dockright" faded></tool-button>
  <tool-button icon="min" label="Minimize" faded></tool-button>
  <tool-button icon="restore" faded></tool-button>
  <tool-button icon="close" faded></tool-button>
</div>`;
  connectedCallback() {
    const names = ['Assembly', 'Layout', 'Sketch', 'Sketch Ink', 'Markup', 'Evaluate', 'SOLIDWORKS Add-Ins', 'Electrical', 'Piping', 'Tubing', 'User Defined Route', 'Simulation', 'MBD'];
    this.shadowRoot.querySelector('nav').innerHTML = names.map((name, i) =>
      `<button role="tab" aria-selected="${i === 0}">${name}</button>`).join('');
  }
}
customElements.define('ribbon-tabs', RibbonTabs);

class AlignBar extends CadElement {
  connectedCallback() {
    const groups = [['d1', 'd2', 'd3', 'd4'], ['d5', 'd6', 'd7', 'd8'], ['left', 'rightal', 'top', 'bottom', 'midh', 'midv'], ['dist1', 'dist2', 'dist1', 'dist2']];
    this.shadowRoot.innerHTML = `
<style>
:host { display: flex; flex-direction: column; flex: none; width: 32px; --tool-width: 32px; }
.grip { flex: none; width: 28px; height: 2px; margin: 2px 0 8px 3px; background: repeating-linear-gradient(90deg, #999 0 2px, transparent 2px 4px); }
tool-button { height: 26px; }
hr { width: 25px; margin: 2px 2px 5px 5px; border: 0; border-top: 1px solid #999; }
hr:last-of-type { width: 30px; margin: 6px 2px 0 0; }
</style>
<div class="grip"></div>
${groups.map((g) => g.map((name) => `<tool-button icon="${name}" dim></tool-button>`).join('') + '<hr>').join('')}`;
  }
}
customElements.define('align-bar', AlignBar);

class TreeRow extends CadElement {
  static markup = `
<style>
:host { display: flex; align-items: center; height: 24px; padding-left: 8px; white-space: nowrap; }
:host([root]) { padding-left: 3px; }
.arrow { flex: none; width: 5px; height: 8px; margin-right: 12px; visibility: hidden; }
:host([open]) .arrow { visibility: visible; }
:host([root]) .arrow { display: none; }
span { margin-left: 5px; }
:host([root]) span { margin-left: 4px; }
</style>
<svg class="arrow" viewBox="0 0 5 8" aria-hidden="true"><path fill="#555" d="M0 0l5 4-5 4z"/></svg>
<cad-icon></cad-icon><span><slot></slot></span>`;
  connectedCallback() {
    const icon = this.shadowRoot.querySelector('cad-icon');
    icon.setAttribute('name', this.getAttribute('icon'));
    icon.connectedCallback();
  }
}
customElements.define('tree-row', TreeRow);

class FeaturePanel extends CadElement {
  static markup = `
<style>
:host { display: flex; flex-direction: column; flex: none; width: 272px; border-right: 1px solid var(--line); box-sizing: content-box; }
.grab { display: grid; place-items: center; height: 19px; margin: 1px 2px 4px 0; border: solid var(--soft-line); border-width: 1px 0; }
.grab i, .handle i { width: 4px; height: 4px; border: 1px solid #999; border-radius: 50%; background: #ccc; }
.tabs { display: flex; align-items: center; height: 25px; margin-right: 2px; border-bottom: 1px solid #999; }
.tabs tool-button {
  box-sizing: border-box; height: 26px; width: 40px; --tool-width: 39px;
  border: solid var(--line); border-width: 1px 1px 1px 0; background: var(--tab);
}
.tabs tool-button:first-child { background: var(--bg); border-bottom-color: var(--bg); }
.tabs .next { margin-left: auto; width: 18px; --tool-width: 18px; border: 0; background: none; }
.filter {
  display: flex; align-items: center; height: 30px; margin: 1px 3px 0; padding-left: 2px;
  border: 1px solid var(--soft-line);
  --tool-width: 18px; --menu-width: 10px;
}
.filter input { flex: 1; min-width: 0; border: 0; outline: 0; background: none; }
.tree { margin-right: 2px; overflow: hidden; border-bottom: 4px solid #3b8fc4; }
.scroll { display: flex; align-items: center; height: 20px; margin: auto 2px 1px 0; background: #f0f0f0; }
.scroll i { width: 159px; height: 3px; margin-left: 20px; border-radius: 2px; background: #868686; }
</style>
<div class="grab"><i></i></div>
<div class="tabs">
  <tool-button icon="asm" label="Feature tree"></tool-button>
  <tool-button icon="props"></tool-button>
  <tool-button icon="config"></tool-button>
  <tool-button icon="target"></tool-button>
  <tool-button icon="appear"></tool-button>
  <tool-button class="next" icon="right" label="Next"></tool-button>
</div>
<div class="filter"><tool-button icon="filter" menu></tool-button><input type="text" aria-label="Filter"></div>
<div class="tree">
  <tree-row root icon="asm">final assembly (Default) &lt;Display Sta</tree-row>
  <tree-row open icon="history">History</tree-row>
  <tree-row icon="sensors">Sensors</tree-row>
  <tree-row open icon="notes">Annotations</tree-row>
  <tree-row icon="plane">Front Plane</tree-row>
  <tree-row icon="plane">Top Plane</tree-row>
  <tree-row icon="plane">Right Plane</tree-row>
  <tree-row icon="origin">Origin</tree-row>
  <tree-row open icon="part">(f) body&lt;1&gt; (Default) &lt;&lt;Default&gt;</tree-row>
  <tree-row open icon="part">motor 2&lt;1&gt; (Default) &lt;&lt;Default&gt;</tree-row>
  <tree-row open icon="part">(-) blade&lt;1&gt; (Default) &lt;&lt;Default</tree-row>
  <tree-row open icon="part">(-) blade&lt;2&gt; (Default) &lt;&lt;Default</tree-row>
  <tree-row open icon="part">motor 2&lt;2&gt; (Default) &lt;&lt;Default&gt;</tree-row>
  <tree-row open icon="part">motor 2&lt;3&gt; (Default) &lt;&lt;Default&gt;</tree-row>
  <tree-row open icon="part">motor 2&lt;4&gt; (Default) &lt;&lt;Default&gt;</tree-row>
  <tree-row open icon="part">(-) blade&lt;3&gt; (Default) &lt;&lt;Default</tree-row>
  <tree-row open icon="part">(-) blade&lt;4&gt; (Default) &lt;&lt;Default</tree-row>
  <tree-row open icon="mates">Mates</tree-row>
</div>
<div class="scroll"><i></i></div>`;
}
customElements.define('feature-panel', FeaturePanel);

// The shaded quadcopter. Model units are a third of a pixel;
// the right half is drawn in a group of its own, 1380 units along.
class ModelScene extends CadElement {
  static markup = `
<style>
:host { display: block; min-width: 0; min-height: 0; }
svg { display: block; width: 100%; height: 100%; }
.model { stroke: #111; stroke-width: 4; stroke-linejoin: round; }
.top { fill: #a89b98; }
.face { fill: #7b716f; }
.front { fill: #6f6564; }
.side { fill: #5f5654; }
.dark { fill: #433b3b; }
.line { fill: none; }
.pink { fill: #ff1070; }
.red { fill: #ff1747; }
.edge { fill: #4d0320; }
text { font: 13px "Liberation Sans", sans-serif; }
</style>
<svg viewBox="0 0 1314 794" preserveAspectRatio="xMidYMid meet" role="img" aria-label="Quadcopter assembly">
  <defs>
    <linearGradient id="post-fill"><stop offset="0" stop-color="#8f9662"/><stop offset=".3" stop-color="#b1b77e"/><stop offset=".65" stop-color="#adb37b"/><stop offset="1" stop-color="#80865a"/></linearGradient>
    <radialGradient id="dome-fill" cx=".45" cy=".4"><stop offset="0" stop-color="#ffffd8"/><stop offset=".6" stop-color="#f7fab0"/><stop offset="1" stop-color="#dfe39c"/></radialGradient>
    <linearGradient id="rim-fill"><stop offset="0" stop-color="#5f5654"/><stop offset=".4" stop-color="#8d817f"/><stop offset="1" stop-color="#6f6564"/></linearGradient>
    <pattern id="winding" width="13" height="80" patternUnits="userSpaceOnUse" patternTransform="rotate(-5)">
      <rect width="13" height="80" fill="#0b0b1e"/><path stroke="#6060c8" stroke-width="4" d="M3 0l4 80"/><path stroke="#30307c" stroke-width="2" d="M10 0l-2 80"/>
    </pattern>
    <g id="post">
      <ellipse cx="509" cy="858" rx="66" ry="16" transform="rotate(-6 509 858)" fill="#7b716f"/>
      <path fill="url(#post-fill)" d="M428 690l16 172q60 14 124-12L550 670z"/>
      <path fill="url(#post-fill)" d="M402 615l8 75q70 20 147-16l-6-80z"/>
      <path fill="url(#dome-fill)" d="M402 615c5-33 42-55 78-55s62 18 72 36q-60 30-150 19z"/>
    </g>
    <g id="coil">
      <path class="face" d="M447 1020v14c40 22 130 18 166-8v-20z"/>
      <path fill="url(#winding)" d="M428 925l12 103q80 18 175-18L605 890z"/>
    </g>
  </defs>

  <g class="model" transform="translate(115 196) scale(.3333)">
    <!-- rear left arm -->
    <path class="side" d="M1131 478l4 37q10 12 52 16l63-26-100-20z"/>
    <path class="dark" d="M1150 486l6 36 30 8 64-25z"/>
    <path class="top" d="M1131 478c0-23 59-38 194-48h50l197 38-230 16-92 21-100-18z"/>
    <path class="edge" d="M1305 235l195-70 272-77-82 42-375 118z"/>
    <use href="#post" x="755" y="-397"/>
    <path class="red" d="M700 380c120-70 250-145 458-148 7 28 62 53 120 58-78 70-268 120-486 145-22-25-62-45-92-55z"/>

    <g transform="translate(1380 0)">
      <!-- rear right arm -->
      <path class="face" d="M345 640l315-126 565-102 5 38-318 58 18 132 317-55 3 37-575 105H545l-165 30-30-5z"/>
      <path class="side" d="M912 508l188-33 8 78-123 54-55 33z"/>
      <path class="top" d="M930 640l55-33 140-47 165-20q50-5 52 10 0 18-95 35z"/>
      <path class="front" d="M965 620l150-58 10 12-110 50zM1247 575q60-10 65-25l-20-5-10 20z"/>
      <path fill="url(#rim-fill)" d="M1247 585q95-17 95-35l6 30q-8 25-98 42z"/>
      <path class="top" d="M600 500l15-20 25-15 480-87 130-16c50-4 72 3 72 16 0 17-52 29-97 34L660 514z"/>
      <use href="#coil" x="2060" y="-463" transform="translate(-1380 0)"/>
      <path fill="url(#rim-fill)" d="M1225 412c45-5 97-17 97-35l3 33q-15 25-95 40z"/>
      <path class="pink" d="M1040 222c-30-17-22-72 0-122q40-40 120-62c60 2 100 42 88 62q3 30-20 45l-148 5 5 28q-25 12-25 44z"/>
      <use href="#post" x="678" y="-463"/>
      <path class="red" d="M1058 190q12-15 32-12l145 29q70 33 73 73-3 25-25 44l-128-27q-65-37-97-82z"/>
      <!-- far leg -->
      <path class="front" d="M718 825l162-12c50-1 75 27 87 57l103 342-25 14h-26l-94-316c-10-40-30-55-55-55l-150 5z"/>
      <path class="line" d="M720 832l145-4c45 0 65 27 75 62l105 336"/>
      <path class="side" d="M395 1005l80 10-18 15v25l-54 30z"/>
      <path class="line" d="M400 1050l75-35M403 1055l54-25"/>
    </g>

    <!-- front left leg and short leg -->
    <path class="front" d="M745 1447l11-352c2-25 19-37 29-35l18 120-8 255-25 12z"/>
    <path class="side" d="M785 1085l18 100-8 250-25 12 10-340z"/>
    <path class="front" d="M998 1185l-3 115h25l25-17 2-98z"/>
    <path class="side" d="M1022 1185l-2 115 25-17 2-98z"/>

    <!-- front left arm -->
    <path class="top" d="M397 1045c3-17 33-25 215-57l121-20 7 52-195 30c-65 8-145 5-148-5z"/>
    <path class="line" d="M610 998l125-22M612 1012l125-22M612 1030l126-12"/>
    <path fill="url(#rim-fill)" d="M397 1045c13 13 83 13 148 5l3 40c-78 10-148 5-148-10z"/>
    <use href="#coil"/>
    <path class="face" d="M520 880l237-35 28 212-237 33-3-40 193-30-16-130-197 25z"/>
    <path class="top" d="M375 877c3-27 75-34 145-44l235-41 2 53-237 35c-80 10-142 5-145-3z"/>
    <path fill="url(#rim-fill)" d="M375 877c5 10 65 13 145 3l5 35c-85 13-145 10-147-3z"/>

    <!-- fuselage -->
    <path class="side" d="M1985 440l-145 52 50 30 110-18 22-30z"/>
    <path class="side" d="M1980 445l55-47 10 7 5 50-30 10-25 20z"/>
    <path class="top" d="M757 790l83-90 70-52 115-28 125-75 100-40 90-21 282-23 50-46 363-17-47 45-143 47-125 110-22 30-138 120-175 75-95 35-420 17z"/>
    <path class="line" d="M1150 547l360-20M1025 620l455-27M1620 461l360-19 65-38M1980 442l-135 48M1995 447l2 33"/>
    <path class="dark" d="M757 800l111 85 37 297-100 8z"/>
    <path class="front" d="M868 885l422-25 40 300-425 22z"/>
    <path class="face" d="M1290 860l90-32 182-66 48 378-280 20z"/>
    <path class="side" d="M1562 762l138-130 28 5 12 98-70 40 30 233 75-3 8 85-173 50z"/>
    <path class="top" d="M757 790l113 78 420-20 270-103 135-115 10 5-143 130-272 97-422 23-111-85z"/>
    <path class="front" d="M805 1190l100-8 425-22 280-20 173-52v10l-93 42-80 10-280 20-415 22z"/>
    <g id="holes" fill="#5d5351"></g>
    <g id="vents" stroke="none"></g>

    <g transform="translate(1380 0)">
      <!-- front right leg -->
      <path class="front" d="M655 1015c25 15 20 45 35 85l78 276h27l23-18-103-350z"/>
      <path class="line" d="M678 1010q20 20 27 60l90 306"/>
      <!-- front right arm -->
      <path class="side" d="M393 836h152l5 75-140 57z"/>
      <path class="front" d="M475 843h75v65l-68-15z"/>
      <path class="top" d="M410 968l80-75 60 10 180 18q45 2 45 14 0 15-55 26-60 17-180 17z"/>
      <path class="line" d="M425 965l68-58 57 6M440 967l55-45 55 6"/>
      <use href="#coil" x="1488" y="-75" transform="translate(-1380 0)"/>
      <path fill="url(#rim-fill)" d="M540 978c110 2 230-18 235-46l3 38c-8 30-128 55-233 48z"/>
      <path class="side" d="M290 783l228 23 4 39-129-9 17 132 130 10 5 40-225-18z"/>
      <path class="top" d="M290 775l70-38 15 5-15-34 185 19h135l60 23c20 8 15 25-20 38-50 12-120 18-202 18l-228-23z"/>
      <path fill="url(#rim-fill)" d="M518 806c102 4 232-16 234-46l5 40c-17 30-137 50-235 45z"/>
      <path class="pink" d="M95 573q35-43 90-73 195-20 345 0l-18 40 13 75c-225 30-325 5-430-42z"/>
      <use href="#post" x="108" y="-75"/>
      <path class="edge" d="M545 567l115 8 390 33 40 17-230-20-195-17z"/>
    </g>
    <!-- front left propeller -->
    <path class="pink" d="M38 633q32-43 94-70 168-15 308 9l-38 48 10 72c-162 28-242 8-374-59z"/>
    <use href="#post"/>
    <path class="edge" d="M430 642l130 13 370 60-80-5-290-45z"/>
  </g>

  <!-- axis triad -->
  <g transform="translate(-305 -184)">
    <path stroke="#8f1a1a" stroke-width="4" d="M356 911l-16-10"/>
    <path fill="#b51a1a" stroke="#6a0e0e" d="M334 897l11-1 2 5-6 5z"/>
    <path stroke="#1818b8" stroke-width="4" d="M356 911l22-7"/>
    <path fill="#14147e" stroke="#14147e" d="M388 901l-13-3 4 11z"/>
    <path stroke="#1b6b1b" stroke-width="5" d="M356 911v-25"/>
    <path fill="#2f9a3a" stroke="#124a12" d="M356 875l5 11q-5 3-10 0z"/>
    <text x="328" y="899" fill="#c81e1e">X</text>
    <text x="350" y="873" fill="#168016">Y</text>
    <text x="385" y="903" fill="#1414c8">Z</text>
  </g>
</svg>`;
  connectedCallback() {
    let holes = '';
    for (let i = 0; i < 10; i++) {
      const x = 981 + i * 62.6;
      const y = 684 - i * 3;
      holes += `<ellipse cx="${x}" cy="${y}" rx="19" ry="6" transform="rotate(-6 ${x} ${y})"/>`;
    }
    this.shadowRoot.getElementById('holes').innerHTML = holes;
    let vents = '';
    for (let row = 0; row < 4; row++) {
      for (let i = 0; i < 6; i++) {
        vents += `<ellipse cx="${1370 + row * 32 + i * 27}" cy="${498 - row * 8 - i * 2}" rx="9" ry="2"/>`;
      }
    }
    vents += '<ellipse cx="1732" cy="476" rx="48" ry="4"/><ellipse cx="1785" cy="463" rx="50" ry="3"/>';
    this.shadowRoot.getElementById('vents').innerHTML = vents;
  }
}
customElements.define('model-scene', ModelScene);

class ModelView extends CadElement {
  static markup = `
<style>
:host { display: grid; flex: 1; min-width: 0; grid-template: minmax(0, 1fr) / minmax(0, 1fr); background: #fff; }
:host > * { grid-area: 1 / 1; }
model-scene, .hud, .panes, .handle { grid-area: 1 / 1; }
.hud { display: flex; justify-self: center; align-self: start; margin-top: 2px; padding-right: 3px; --tool-width: 26px; --menu-width: 14px; opacity: 0.85; }
.panes { display: flex; flex-direction: column; justify-self: end; align-self: start; margin-top: 53px; width: 33px; --tool-width: 32px; }
.panes tool-button { box-sizing: border-box; height: 30px; border: solid var(--line); border-width: 0 0 1px 1px; background: var(--tab); }
.panes tool-button:first-child { border-top-width: 1px; }
.panes tool-button:nth-child(2) { background: var(--bg); }
.handle {
  display: grid; place-items: center; align-self: start; width: 10px; height: 47px; margin-top: 358px;
  border: 1px solid var(--line); border-left: 0; background: var(--bg);
}
.handle i { width: 4px; height: 4px; border: 1px solid #999; border-radius: 50%; background: #ccc; }
</style>
<model-scene></model-scene>
<div class="hud">
  <tool-button icon="zoomfit"></tool-button>
  <tool-button icon="zoomarea"></tool-button>
  <tool-button icon="prevview"></tool-button>
  <tool-button icon="sectview"></tool-button>
  <tool-button icon="dynview"></tool-button>
  <tool-button icon="orient" menu></tool-button>
  <tool-button icon="display" menu></tool-button>
  <tool-button icon="eye" menu></tool-button>
  <tool-button icon="ballpen"></tool-button>
  <tool-button icon="scene" menu></tool-button>
  <tool-button icon="monitor" menu></tool-button>
</div>
<div class="handle"><i></i></div>
<div class="panes">
  <tool-button icon="home"></tool-button>
  <tool-button icon="books" label="Design library"></tool-button>
  <tool-button icon="explorer"></tool-button>
  <tool-button icon="palette"></tool-button>
  <tool-button icon="ball" label="Appearances"></tool-button>
  <tool-button icon="props"></tool-button>
  <tool-button icon="valve"></tool-button>
  <tool-button icon="route"></tool-button>
</div>`;
}
customElements.define('model-view', ModelView);

class StudyTabs extends CadElement {
  static markup = `
<style>
:host { display: flex; flex: none; height: 20px; }
.lead { box-sizing: border-box; width: 27px; margin-left: 32px; border-left: 1px solid #9fb8bc; }
.nav { display: flex; border-top: 1px solid #111; }
.nav button { width: 20px; height: 19px; margin: 0; padding: 0; border: 1px solid #7e8296; background: #a2a6bb; }
.nav svg { display: block; width: 18px; height: 16px; }
.tab {
  box-sizing: border-box; width: 89px; height: 20px; margin: 0; padding: 0 12px;
  border: solid var(--line); border-width: 1px 1px 0 0; background: var(--tab);
  font: 14px/18px "Noto Sans", "Open Sans", sans-serif; color: var(--text); text-align: left; white-space: nowrap;
}
.tab.on { width: 77px; padding: 0 0 0 16px; font-weight: 700; background: var(--bg); border-top-color: transparent; }
.tab.wide { width: 144px; padding-left: 14px; }
.rest { flex: 1; border-top: 1px solid var(--line); }
</style>
<div class="lead"></div>
<div class="nav">
  <button aria-label="First"><svg viewBox="0 0 18 16"><path fill="#7b7f92" d="M12 3v10L7 8zM5 3h1v10H5z"/></svg></button>
  <button aria-label="Previous"><svg viewBox="0 0 18 16"><path fill="#7b7f92" d="M11 3v10L6 8z"/></svg></button>
  <button aria-label="Next"><svg viewBox="0 0 18 16"><path fill="#7b7f92" d="M7 3v10l5-5z"/></svg></button>
  <button aria-label="Last"><svg viewBox="0 0 18 16"><path fill="#7b7f92" d="M6 3v10l5-5zM12 3h1v10h-1z"/></svg></button>
</div>
<button class="tab on">Model</button><button class="tab">3D Views</button><button class="tab wide">Motion Study 1</button>
<div class="rest"></div>`;
}
customElements.define('study-tabs', StudyTabs);

class DesignLibrary extends CadElement {
  static markup = `
<style>
:host { display: block; flex: none; width: 300px; border-left: 1px solid var(--line); background: var(--bg); }
header { display: flex; align-items: center; height: 22px; padding: 0 3px 0 5px; background: #acadb1; border-bottom: 1px solid #111; --tool-width: 20px; }
h2 { flex: 1; margin: 0; text-align: center; font-size: 14px; line-height: 20px; }
.tools { display: flex; align-items: center; gap: 34px; height: 27px; margin-left: 4px; padding: 6px 0 0 3px; border-bottom: 1px solid #aaa; }
.pair { display: flex; gap: 5px; }
.recent { --tool-width: 10px; }
ul { list-style: none; margin: 0; padding: 8px 0 0 8px; height: 168px; }
li { display: flex; align-items: center; height: 24px; }
li svg { width: 18px; height: 12px; margin-right: 5px; }
li cad-icon { margin-right: 6px; }
.bar { height: 2px; margin-left: 5px; border: solid; border-width: 2px 0; border-color: #9198ac #5f6579; background: #e4e6ee; }
</style>
<header>
  <tool-button icon="collapse"></tool-button>
  <h2>Design Library</h2>
  <tool-button icon="gear" label="Options"></tool-button>
  <tool-button icon="pin"></tool-button>
</header>
<div class="tools">
  <tool-button icon="back"></tool-button>
  <tool-button icon="forward"></tool-button>
  <span class="pair"><tool-button class="recent" icon="caret" label="Recent"></tool-button><tool-button icon="bookadd"></tool-button></span>
  <tool-button icon="booknew"></tool-button>
  <tool-button icon="foldernew"></tool-button>
</div>
<ul>
  <li><svg viewBox="0 0 18 12"><path fill="none" stroke="#888" stroke-width="1.5" d="M6 1l5 5-5 5"/></svg><cad-icon name="bolt"></cad-icon>Toolbox</li>
  <li><svg viewBox="0 0 18 12"><path fill="none" stroke="#888" stroke-width="1.5" d="M6 1l5 5-5 5"/></svg><cad-icon name="sw"></cad-icon>SOLIDWORKS Content</li>
  <li><svg viewBox="0 0 18 12"></svg><cad-icon name="supply"></cad-icon>3D Components - PartSupply</li>
</ul>
<div class="bar"></div>`;
}
customElements.define('design-library', DesignLibrary);

class StatusBar extends CadElement {
  static markup = `
<style>
:host { display: flex; flex: none; align-items: center; height: 19px; padding: 2px 0 0 1px; border-top: 1px solid var(--line); line-height: 20px; overflow: hidden; }
.state { display: flex; align-items: center; margin-left: auto; gap: 18px; }
.units { display: flex; align-items: center; margin-left: 80px; gap: 22px; padding-right: 3px; }
.units button { display: flex; align-items: center; gap: 25px; margin: 0; padding: 0; border: 0; background: none; font: inherit; color: inherit; }
.rebuild { margin-left: 10px; }
.up { width: 6px; height: 4px; }
</style>
<span>SOLIDWORKS Premium 2023 SP1.0</span>
<div class="state"><span>Under Defined</span><span>Editing Assembly</span><cad-icon class="rebuild" name="rebuild"></cad-icon></div>
<div class="units">
  <button>MMGS <svg class="up" viewBox="0 0 6 4" aria-hidden="true"><path fill="#444" d="M0 4l3-4 3 4z"/></svg></button>
  <cad-icon name="tag"></cad-icon>
</div>`;
}
customElements.define('status-bar', StatusBar);

class CadApp extends CadElement {
  static markup = `
<style>
:host { display: flex; flex-direction: column; height: 100vh; overflow: hidden; }
title-bar, check-bar, command-ribbon { flex: none; }
.work { display: flex; flex: 1; min-height: 0; }
.document { display: flex; flex-direction: column; flex: 1; min-width: 0; }
.stage { display: flex; flex: 1; min-height: 0; }
</style>
<title-bar></title-bar>
<check-bar></check-bar>
<command-ribbon></command-ribbon>
<div class="work">
  <div class="document">
    <ribbon-tabs></ribbon-tabs>
    <div class="stage">
      <align-bar></align-bar>
      <feature-panel></feature-panel>
      <model-view></model-view>
    </div>
    <study-tabs></study-tabs>
  </div>
  <design-library></design-library>
</div>
<status-bar></status-bar>`;
}
customElements.define('cad-app', CadApp);
</script>
</body>
</html>
